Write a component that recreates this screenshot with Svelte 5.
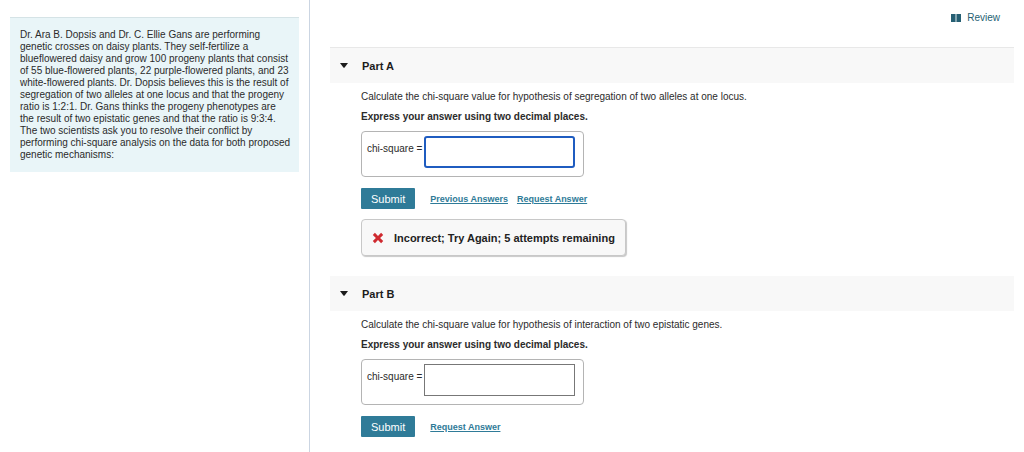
<script>
  const parts = [
    {
      id: 'a',
      title: 'Part A',
      question: 'Calculate the chi-square value for hypothesis of segregation of two alleles at one locus.',
      links: ['Previous Answers', 'Request Answer'],
      feedback: 'Incorrect; Try Again; 5 attempts remaining',
      active: true
    },
    {
      id: 'b',
      title: 'Part B',
      question: 'Calculate the chi-square value for hypothesis of interaction of two epistatic genes.',
      links: ['Request Answer'],
      feedback: '',
      active: false
    }
  ];
  let open = $state({ a: true, b: true });
  let answers = $state({ a: '', b: '' });
</script>

<div class="page">
  <aside>
    <p class="intro">
      Dr. Ara B. Dopsis and Dr. C. Ellie Gans are performing genetic crosses on daisy plants. They self-fertilize a
      blueflowered daisy and grow 100 progeny plants that consist of 55 blue-flowered plants, 22 purple-flowered
      plants, and 23 white-flowered plants. Dr. Dopsis believes this is the result of segregation of two alleles at one
      locus and that the progeny ratio is 1:2:1. Dr. Gans thinks the progeny phenotypes are the result of two epistatic
      genes and that the ratio is 9:3:4. The two scientists ask you to resolve their conflict by performing chi-square
      analysis on the data for both proposed genetic mechanisms:
    </p>
  </aside>

  <main>
    <div class="tools">
      <a class="review" href="#review">
        <svg width="10" height="8" viewBox="0 0 10 8" aria-hidden="true">
          <path d="M0 0h4.6v8H0zM5.4 0H10v8H5.4z" fill="#265f73" />
          <path d="M4.6 0h.8v7h-.8z" fill="#8fb0bb" />
        </svg>
        Review
      </a>
    </div>

    {#each parts as part (part.id)}
      <section>
        <h2>
          <button class="toggle" type="button" aria-expanded={open[part.id]} onclick={() => (open[part.id] = !open[part.id])}>
            <svg class:closed={!open[part.id]} width="8" height="5" viewBox="0 0 8 5" aria-hidden="true">
              <path d="M0 0h8L4.6 4.4a.8.8 0 0 1-1.2 0z" fill="#1c1c1c" />
            </svg>
            {part.title}
          </button>
        </h2>
        {#if open[part.id]}
          <div class="body">
            <p>{part.question}</p>
            <p class="hint">Express your answer using two decimal places.</p>
            <div class="answer">
              <label for="answer-{part.id}">chi-square =</label>
              <input id="answer-{part.id}" type="text" class:active={part.active} bind:value={answers[part.id]} />
            </div>
            <div class="actions">
              <button class="submit" type="button">Submit</button>
              {#each part.links as link}
                <a href="#{part.id}">{link}</a>
              {/each}
            </div>
            {#if part.feedback}
              <div class="feedback" role="status">
                <svg width="12" height="12" viewBox="0 0 12 12" aria-hidden="true">
                  <path d="M2.9.8 6 3.9 9.1.8l2.1 2.1L8.1 6l3.1 3.1-2.1 2.1L6 8.1l-3.1 3.1L.8 9.1 3.9 6 .8 2.9z" fill="#cf2a30" />
                </svg>
                {part.feedback}
              </div>
            {/if}
          </div>
        {/if}
      </section>
    {/each}
  </main>
</div>

<style>
  :global(body) {
    background: #fff;
  }
  .page {
    display: grid;
    grid-template-columns: 309px 1fr;
    min-height: 100vh;
    box-sizing: border-box;
    font-family: "Liberation Sans", Arial, sans-serif;
    font-size: 10px;
    line-height: 12px;
    color: #2b2b2b;
  }
  p, h2 {
    margin: 0;
  }
  aside {
    padding: 17px 10px;
  }
  .intro {
    padding: 11px 8px 11px 10px;
    border-top: 1px solid #d5e3e6;
    background: #e9f5f8;
  }
  main {
    border-left: 1px solid #cbd5e2;
    padding: 0 10px 14px 20px;
  }
  .tools {
    display: flex;
    justify-content: flex-end;
    padding: 12px 14px 23px 0;
  }
  .review {
    display: flex;
    align-items: center;
    gap: 6px;
    color: #265f73;
    text-decoration: none;
  }
  section + section {
    margin-top: 20px;
  }
  h2 {
    font-size: 11px;
    line-height: 12px;
    background: #f8f8f8;
  }
  section:first-of-type h2 {
    border-top: 1px solid #e8e8e8;
  }
  .toggle {
    display: flex;
    align-items: center;
    gap: 14px;
    width: 100%;
    height: 35px;
    padding: 0 10px;
    border: 0;
    background: none;
    font: inherit;
    color: #1c1c1c;
    cursor: pointer;
  }
  .closed {
    transform: rotate(-90deg);
  }
  .body {
    padding: 8px 0 0 31px;
  }
  .hint {
    margin-top: 8px;
    font-weight: bold;
  }
  .answer {
    display: flex;
    box-sizing: border-box;
    width: fit-content;
    margin-top: 8px;
    padding: 4px 8px 8px 5px;
    gap: 2px;
    border: 1px solid #b4b4b4;
    border-radius: 4px;
  }
  .answer label {
    padding-top: 7px;
  }
  input {
    box-sizing: border-box;
    width: 151px;
    height: 32px;
    padding: 0 6px;
    border: 1px solid #777;
    background: #fff;
    font: inherit;
    outline: none;
  }
  input.active,
  input:focus {
    border: 2px solid #1f5cc0;
    border-radius: 3px;
  }
  .actions {
    display: flex;
    align-items: center;
    gap: 9px;
    margin-top: 11px;
  }
  .submit {
    height: 21px;
    margin-right: 6px;
    padding: 0 10px;
    border: 0;
    border-radius: 1px;
    background: #2f7b98;
    color: #fff;
    font: inherit;
    font-size: 11px;
    cursor: pointer;
  }
  .actions a {
    color: #2f7b98;
    font-size: 9px;
    font-weight: bold;
  }
  .feedback {
    display: flex;
    align-items: center;
    gap: 10px;
    box-sizing: border-box;
    width: fit-content;
    min-height: 37px;
    margin-top: 10px;
    padding: 10px;
    border: 1px solid #c8c8c8;
    border-radius: 4px;
    background: #f8f8f8;
    box-shadow: 1px 1px 1px #c8c8c8;
    font-size: 11px;
    font-weight: bold;
    color: #222;
  }
</style>
